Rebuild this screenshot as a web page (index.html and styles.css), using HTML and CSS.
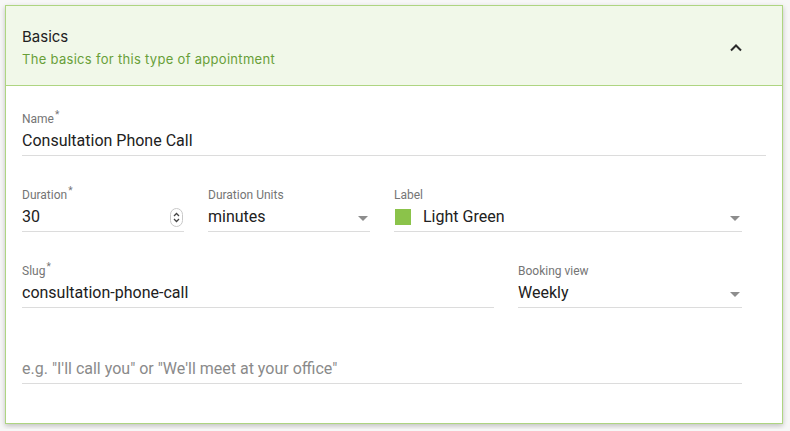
FILE: index.html
```html
<!DOCTYPE html>
<html>
<head>
<meta charset="utf-8">
<link rel="stylesheet" href="styles.css">
</head>
<body>
<div class="card">
  <div class="card-header">
    <div class="titles">
      <div class="title">Basics</div>
      <div class="subtitle">The basics for this type of appointment</div>
    </div>
    <svg class="chevron" width="14" height="10" viewBox="0 0 14 10"><path d="M2 7.5 L7 2.5 L12 7.5" fill="none" stroke="#2b2b2b" stroke-width="2"/></svg>
  </div>
  <div class="card-body">
    <div class="row">
      <div class="field w-full">
        <div class="label">Name<sup>*</sup></div>
        <div class="input">Consultation Phone Call</div>
      </div>
    </div>
    <div class="row">
      <div class="field w-162">
        <div class="label">Duration<sup>*</sup></div>
        <div class="input spaced">30
          <svg class="spin" width="13" height="19" viewBox="0 0 13 19"><rect x="0.5" y="0.5" width="12" height="18" rx="6" fill="none" stroke="#c8c8c8"/><path d="M4 8 L6.5 5.5 L9 8" fill="none" stroke="#444" stroke-width="1.3"/><path d="M4 11 L6.5 13.5 L9 11" fill="none" stroke="#444" stroke-width="1.3"/></svg>
        </div>
      </div>
      <div class="field w-162">
        <div class="label">Duration Units</div>
        <div class="input spaced">minutes<span class="caret"></span></div>
      </div>
      <div class="field w-348">
        <div class="label">Label</div>
        <div class="input spaced"><span class="swatch-wrap"><span class="swatch"></span>Light Green</span><span class="caret"></span></div>
      </div>
    </div>
    <div class="row">
      <div class="field w-472">
        <div class="label">Slug<sup>*</sup></div>
        <div class="input">consultation-phone-call</div>
      </div>
      <div class="field w-224">
        <div class="label">Booking view</div>
        <div class="input spaced">Weekly<span class="caret"></span></div>
      </div>
    </div>
    <div class="row">
      <div class="field w-720">
        <div class="label"></div>
        <div class="input placeholder">e.g. "I'll call you" or "We'll meet at your office"</div>
      </div>
    </div>
  </div>
</div>
</body>
</html>
```
FILE: styles.css
```css
html, body {
  margin: 0;
  background: #f7f7f7;
}
body {
  padding: 5px;
  font-family: Roboto, "Liberation Sans", sans-serif;
}
.card {
  width: 776px;
  height: 417px;
  border: 1px solid #aed581;
  background: #fff;
  box-shadow: 0 2px 5px rgba(0,0,0,0.22);
}
.card-header {
  height: 80px;
  box-sizing: border-box;
  padding: 20px 39px 0 16px;
  background: #f1f8e9;
  border-bottom: 1px solid #aed581;
  display: flex;
  justify-content: space-between;
  align-items: flex-start;
}
.title {
  font-family: Inter, "Noto Sans", sans-serif;
  font-size: 15px;
  line-height: 22px;
  color: #212121;
}
.subtitle {
  font-family: Inter, "Noto Sans", sans-serif;
  font-size: 13px;
  letter-spacing: 0.3px;
  line-height: 20px;
  margin-top: 1px;
  color: #689f38;
}
.chevron {
  margin-top: 17px;
}
.card-body {
  padding: 24px 16px 0 16px;
  display: flex;
  flex-direction: column;
  gap: 30px;
}
.row {
  display: flex;
  gap: 24px;
}
.field {
  display: flex;
  flex-direction: column;
}
.w-full { width: 744px; }
.w-162 { width: 162px; }
.w-348 { width: 348px; }
.w-472 { width: 472px; }
.w-224 { width: 224px; }
.w-720 { width: 720px; }
.label {
  height: 18px;
  font-size: 12px;
  line-height: 18px;
  color: #757575;
}
.label sup {
  font-size: 10px;
  line-height: 0;
  vertical-align: 5px;
  margin-left: 1px;
}
.input {
  padding: 1px 0 2px;
  font-size: 16px;
  line-height: 24px;
  color: #212121;
  border-bottom: 1px solid #dcdcdc;
}
.spaced {
  display: flex;
  justify-content: space-between;
  align-items: center;
}
.placeholder {
  color: #8a8a8a;
}
.spin {
  margin-right: 1px;
  margin-top: 1px;
}
.caret {
  width: 0;
  height: 0;
  border-left: 5px solid transparent;
  border-right: 5px solid transparent;
  border-top: 5px solid #8d8d8d;
  margin-right: 2px;
  margin-top: 3px;
}
.swatch-wrap {
  display: flex;
  align-items: center;
}
.swatch {
  width: 16px;
  height: 16px;
  background: #8bc34a;
  margin: 0 12px 1px 1px;
}
```
